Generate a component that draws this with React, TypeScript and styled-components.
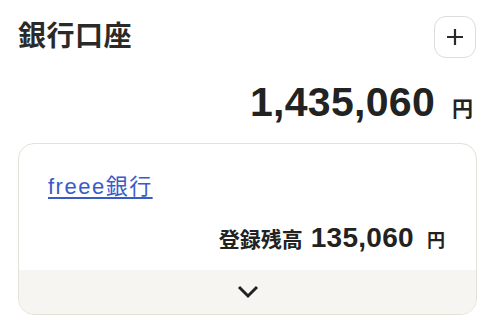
import React from "react";
import styled, { createGlobalStyle } from "styled-components";

const GlobalStyle = createGlobalStyle`
  body {
    margin: 0;
    background: #ffffff;
    font-family: "Liberation Sans", "Noto Sans CJK JP", sans-serif;
    color: #222222;
  }
`;

const Page = styled.div`
  width: 498px;
  box-sizing: border-box;
  padding: 16px 21px 0 18px;
`;

const Header = styled.div`
  display: flex;
  align-items: center;
  justify-content: space-between;
  height: 42px;
`;

const Title = styled.h2`
  margin: 0;
  font-size: 28px;
  font-weight: 700;
  line-height: 1;
  letter-spacing: 0.5px;
  color: #2a2a2a;
`;

const IconButton = styled.button`
  width: 42px;
  height: 42px;
  margin-right: 1px;
  display: flex;
  align-items: center;
  justify-content: center;
  padding: 0;
  background: #ffffff;
  border: 1px solid #dcdcdc;
  border-radius: 12px;
  color: #2a2a2a;
`;

const Total = styled.div`
  display: flex;
  align-items: baseline;
  justify-content: flex-end;
  margin-top: 24px;
  padding-right: 4px;
  line-height: 1;
`;

const Amount = styled.span<{ size: number }>`
  font-size: ${(p) => p.size}px;
  font-weight: 700;
  letter-spacing: 0.3px;
  color: #222222;
`;

const Yen = styled.span<{ size: number; gap: number }>`
  font-size: ${(p) => p.size}px;
  font-weight: 700;
  margin-left: ${(p) => p.gap}px;
  color: #222222;
`;

const Card = styled.div`
  margin-top: 20px;
  border: 1px solid #e4e1d8;
  border-radius: 16px;
  overflow: hidden;
  background: #ffffff;
`;

const CardBody = styled.div`
  padding: 28px 31px 18px 29px;
`;

const BankLink = styled.a`
  display: block;
  width: max-content;
  font-size: 22px;
  line-height: 30px;
  letter-spacing: 1.5px;
  color: #3a5bc7;
  text-decoration: underline;
  text-underline-offset: 3px;
  text-decoration-thickness: 2px;
`;

const Balance = styled.div`
  display: flex;
  align-items: baseline;
  justify-content: flex-end;
  margin-top: 22px;
  line-height: 1;
`;

const BalanceLabel = styled.span`
  font-size: 21px;
  font-weight: 700;
  margin-right: 8px;
  color: #222222;
`;

const Footer = styled.button`
  width: 100%;
  height: 44px;
  display: flex;
  align-items: center;
  justify-content: center;
  padding: 0;
  border: none;
  background: #f6f5f1;
  color: #222222;
`;

export default function App() {
  return (
    <>
      <GlobalStyle />
      <Page>
        <Header>
          <Title>銀行口座</Title>
          <IconButton aria-label="追加">
            <svg width="18" height="18" viewBox="0 0 18 18">
              <path d="M9 1v16M1 9h16" stroke="currentColor" strokeWidth="2.2" fill="none" />
            </svg>
          </IconButton>
        </Header>
        <Total>
          <Amount size={41}>1,435,060</Amount>
          <Yen size={21} gap={17}>円</Yen>
        </Total>
        <Card>
          <CardBody>
            <BankLink href="#">freee銀行</BankLink>
            <Balance>
              <BalanceLabel>登録残高</BalanceLabel>
              <Amount size={28}>135,060</Amount>
              <Yen size={18} gap={13}>円</Yen>
            </Balance>
          </CardBody>
          <Footer aria-label="開く">
            <svg width="22" height="14" viewBox="0 0 22 14">
              <path d="M2 2l9 9 9-9" stroke="currentColor" strokeWidth="3" fill="none" />
            </svg>
          </Footer>
        </Card>
      </Page>
    </>
  );
}
